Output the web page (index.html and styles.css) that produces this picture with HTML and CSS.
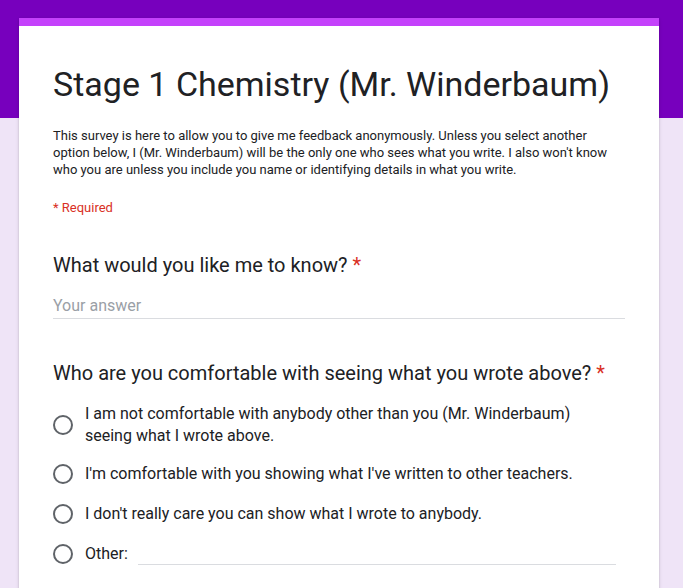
FILE: index.html
```html
<!DOCTYPE html>
<html>
<head>
<meta charset="utf-8">
<link rel="stylesheet" href="styles.css">
</head>
<body>
<div class="band"></div>
<div class="page">
  <div class="card">
    <div class="accent"></div>
    <div class="head">
      <h1 class="title">Stage 1 Chemistry (Mr. Winderbaum)</h1>
      <p class="desc">This survey is here to allow you to give me feedback anonymously. Unless you select another option below, I (Mr. Winderbaum) will be the only one who sees what you write. I also won't know who you are unless you include you name or identifying details in what you write.</p>
      <div class="req">* Required</div>
    </div>
    <div class="question">
      <div class="qtitle">What would you like me to know? <span class="star">*</span></div>
      <div class="answer">Your answer</div>
    </div>
    <div class="question q2">
      <div class="qtitle">Who are you comfortable with seeing what you wrote above? <span class="star">*</span></div>
      <div class="options">
        <div class="opt"><span class="radio"></span><span class="otext">I am not comfortable with anybody other than you (Mr. Winderbaum) seeing what I wrote above.</span></div>
        <div class="opt"><span class="radio"></span><span class="otext">I'm comfortable with you showing what I've written to other teachers.</span></div>
        <div class="opt"><span class="radio"></span><span class="otext">I don't really care you can show what I wrote to anybody.</span></div>
        <div class="opt"><span class="radio"></span><span class="otext">Other:</span><span class="otherline"></span></div>
      </div>
    </div>
  </div>
</div>
</body>
</html>
```
FILE: styles.css
```css
html, body { margin: 0; padding: 0; }
body {
  background: #efe4f7;
  font-family: Roboto, "Noto Sans", sans-serif;
  color: #202124;
  height: 588px;
  overflow: hidden;
  position: relative;
}
.band {
  position: absolute;
  left: 0; top: 0; right: 0;
  height: 118px;
  background: #7700bd;
}
.page {
  position: relative;
  padding: 18px 0 0 19px;
}
.card {
  width: 640px;
  background: #fff;
  box-shadow: 0 1px 2px rgba(0,0,0,0.15), 0 1px 4px rgba(0,0,0,0.1);
  height: 600px;
}
.accent { height: 8px; background: #c441fb; }
.head { padding: 30px 34px 0 34px; }
.title {
  margin: 0;
  font-weight: 400;
  font-size: 34px;
  line-height: 56px;
  color: #202124;
}
.desc {
  margin: 15px 0 0 0;
  font-size: 13px;
  line-height: 17px;
  color: #202124;
}
.req {
  margin-top: 21px;
  font-size: 13px;
  line-height: 17px;
  color: #d93025;
}
.question { padding: 0 34px; }
.qtitle {
  font-size: 20px;
  line-height: 26px;
  color: #202124;
  margin-top: 36px;
}
.star { color: #d93025; }
.answer {
  margin-top: 18px;
  width: 572px;
  font-size: 16px;
  line-height: 20px;
  padding-bottom: 2px;
  color: #9aa0a6;
  border-bottom: 1px solid #dadce0;
}
.q2 .qtitle { margin-top: 41px; }
.options { margin-top: 16px; }
.opt {
  display: flex;
  align-items: center;
  min-height: 40px;
}
.opt:first-child { min-height: 46px; margin-bottom: 6px; }
.radio {
  width: 16px;
  height: 16px;
  border: 2px solid #5f6368;
  border-radius: 50%;
  flex: none;
  margin: 0 12px 0 0;
}
.otext {
  font-size: 16px;
  line-height: 22px;
  color: #202124;
  max-width: 520px;
}
.otherline {
  flex: none;
  width: 478px;
  margin-left: 10px;
  margin-top: 21px;
  border-bottom: 1px solid #dadce0;
}
```
